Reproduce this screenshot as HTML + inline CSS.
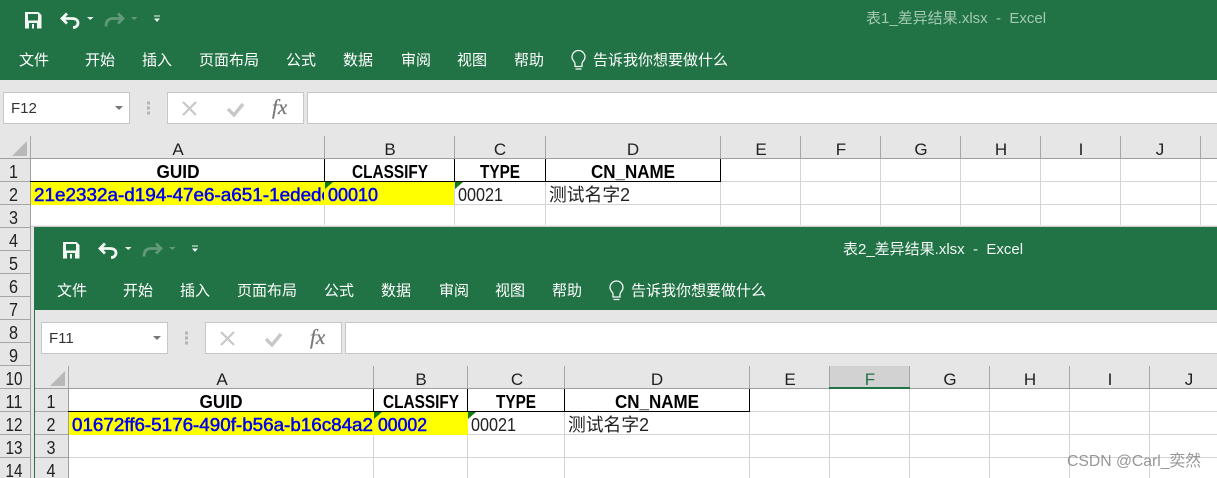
<!DOCTYPE html>
<html><head><meta charset="utf-8">
<style>
html,body{margin:0;padding:0;background:#fff;width:1217px;height:478px;overflow:hidden}
svg{display:block;position:absolute;left:0;top:0}
text{font-family:"Liberation Sans","Noto Sans CJK SC",sans-serif}
.rb{font-size:15px;fill:#fff}
.h{font-size:17px;fill:#222;text-anchor:middle}
.r{font-size:18px;fill:#222;text-anchor:middle}
.b{font-size:18px;font-weight:bold;fill:#000;text-anchor:middle}
.bl{font-size:18px;fill:#0000f0;stroke:#0000f0;stroke-width:.5px}
.d{font-size:18px;fill:#222}
.nb{font-size:15px;fill:#333}
.ti{font-size:15px;white-space:pre}
.fx{font-size:21px;font-style:italic;font-family:"Liberation Serif",serif;fill:#7a7a7a;stroke:#7a7a7a;stroke-width:.3px}
.g{stroke:#d4d4d4;stroke-width:1;fill:none}
.t{stroke:#a6a6a6;stroke-width:1}
</style></head><body>
<svg width="1217" height="478" viewBox="0 0 1217 478" xmlns="http://www.w3.org/2000/svg">
<rect width="1217" height="478" fill="#fff"/>

<!-- WINDOW 1 -->
<rect width="1217" height="80" fill="#217346"/>
<rect y="80" width="1217" height="78" fill="#e6e6e6"/>
<path d="M25 12h13.500l3 3v13.500h-16.500z" fill="#f4f8f5"/><rect x="28" y="14" width="10" height="6.500" fill="#217346"/><rect x="29" y="23" width="8" height="5.500" fill="#217346"/><rect x="32" y="24" width="2" height="4.500" fill="#f4f8f5"/>
<path d="M67 13.500l-5 5 5 5M62 18.500h10c4 0 6 2 6 4.500s-2 4.500-5 4.500" fill="none" stroke="#f4f8f5" stroke-width="2.800"/>
<path d="M87 17h6.500l-3.250 3z" fill="#f4f8f5"/>
<path d="M118 13.500l5 5-5 5M123 18.500h-10c-5 0-7 3-7 8" fill="none" stroke="#62997a" stroke-width="2.800"/>
<path d="M131 17h6.500l-3.250 3z" fill="#62997a"/>
<path d="M154 15.500h6v1h-6zM154 18.500h6l-3 3.500z" fill="#f4f8f5"/>
<text class="ti" x="866" y="23" fill="#a3c9b3">表1_差异结果.xlsx  -  Excel</text>
<text class="rb" x="19" y="65">文件</text><text class="rb" x="85" y="65">开始</text><text class="rb" x="142" y="65">插入</text><text class="rb" x="199" y="65">页面布局</text><text class="rb" x="286" y="65">公式</text><text class="rb" x="343" y="65">数据</text><text class="rb" x="401" y="65">审阅</text><text class="rb" x="457" y="65">视图</text><text class="rb" x="514" y="65">帮助</text>
<path d="M575 66.500v-3c0-2-3-3-3-6.500a6.500 6.500 0 0 1 13 0c0 3.500-3 4.500-3 6.500v3zM575.500 69h6" fill="none" stroke="#f4f8f5" stroke-width="1.300"/>
<text class="rb" x="593" y="65">告诉我你想要做什么</text>

<rect x="3.500" y="92.500" width="126" height="31" fill="#fff" stroke="#c6c6c6"/>
<text class="nb" x="11" y="113">F12</text>
<path d="M115 106h8l-4 4z" fill="#777"/>
<path d="M147 101.500h3v3h-3zM147 106.500h3v3h-3zM147 111.500h3v3h-3z" fill="#b4b4b4"/>
<rect x="167.500" y="92.500" width="136" height="31" fill="#fff" stroke="#c6c6c6"/>
<path d="M183 102l13 13M196 102l-13 13" stroke="#c8c8c8" stroke-width="2.200" fill="none"/>
<path d="M228 109l6 6 9-11" stroke="#c8c8c8" stroke-width="3.400" fill="none"/>
<text class="fx" x="272" y="114">fx</text>
<rect x="307.500" y="92.500" width="915" height="31" fill="#fff" stroke="#c6c6c6"/>
<path d="M27 141v15H12z" fill="#b8b8b8"/>
<path class="t" d="M30.500 136v22M324.500 136v22M454.500 136v22M545.500 136v22M720.500 136v22M800.500 136v22M880.500 136v22M960.500 136v22M1040.500 136v22M1120.500 136v22M1200.500 136v22"/>
<rect x="0" y="158" width="1217" height="1" fill="#9e9e9e"/>
<rect x="0" y="159" width="30" height="319" fill="#e6e6e6"/>
<rect x="30" y="159" width="1" height="319" fill="#9e9e9e"/>
<path class="g" d="M31 181.500h1186M31 204.500h1186M324.500 159v68M454.500 159v68M545.500 159v68M720.500 159v68M800.500 159v68M880.500 159v68M960.500 159v68M1040.500 159v68M1120.500 159v68M1200.500 159v68"/>
<rect x="31" y="182" width="423" height="23" fill="#ff0"/>
<path d="M30 181.500h691M324.500 159v23M454.500 159v23M545.500 159v23M720.500 159v23" stroke="#000" stroke-width="1" fill="none"/>
<path d="M325 182h8l-8 7zM455 182h8l-8 7z" fill="#107c10"/>
<text class="h" x="178" y="155">A</text><text class="h" x="390" y="155">B</text><text class="h" x="500" y="155">C</text><text class="h" x="633" y="155">D</text><text class="h" x="761" y="155">E</text><text class="h" x="841" y="155">F</text><text class="h" x="921" y="155">G</text><text class="h" x="1001" y="155">H</text><text class="h" x="1081" y="155">I</text><text class="h" x="1160" y="155">J</text>
<text class="b" x="178" y="178" textLength="43" lengthAdjust="spacingAndGlyphs">GUID</text><text class="b" x="390" y="178" textLength="76" lengthAdjust="spacingAndGlyphs">CLASSIFY</text><text class="b" x="500" y="178" textLength="40" lengthAdjust="spacingAndGlyphs">TYPE</text><text class="b" x="633" y="178" textLength="84" lengthAdjust="spacingAndGlyphs">CN_NAME</text>
<svg x="34" y="182" width="290" height="23"><text class="bl" x="0" y="19" textLength="297" lengthAdjust="spacingAndGlyphs">21e2332a-d194-47e6-a651-1ededc</text></svg>
<text class="bl" x="328" y="201" textLength="50" lengthAdjust="spacingAndGlyphs">00010</text>
<text class="d" x="458" y="201" textLength="45" lengthAdjust="spacingAndGlyphs">00021</text>
<text class="d" x="549" y="201" textLength="81" lengthAdjust="spacingAndGlyphs">测试名字2</text>
<!-- window 1 row headers -->
<path class="t" stroke="#b4b4b4" d="M0 181.500h30M0 204.500h30M0 227.500h30M0 250.500h30M0 273.500h30M0 296.500h30M0 319.500h30M0 342.500h30M0 365.500h30M0 388.500h30M0 411.500h30M0 434.500h30M0 457.500h30"/>
<text class="r" x="13.500" y="178" textLength="9" lengthAdjust="spacingAndGlyphs">1</text><text class="r" x="13.500" y="201" textLength="9" lengthAdjust="spacingAndGlyphs">2</text><text class="r" x="13.500" y="224" textLength="9" lengthAdjust="spacingAndGlyphs">3</text><text class="r" x="13.500" y="247" textLength="9" lengthAdjust="spacingAndGlyphs">4</text><text class="r" x="13.500" y="270" textLength="9" lengthAdjust="spacingAndGlyphs">5</text><text class="r" x="13.500" y="293" textLength="9" lengthAdjust="spacingAndGlyphs">6</text><text class="r" x="13.500" y="316" textLength="9" lengthAdjust="spacingAndGlyphs">7</text><text class="r" x="13.500" y="339" textLength="9" lengthAdjust="spacingAndGlyphs">8</text><text class="r" x="13.500" y="362" textLength="9" lengthAdjust="spacingAndGlyphs">9</text><text class="r" x="14" y="385" textLength="17" lengthAdjust="spacingAndGlyphs">10</text><text class="r" x="14" y="408" textLength="17" lengthAdjust="spacingAndGlyphs">11</text><text class="r" x="14" y="431" textLength="17" lengthAdjust="spacingAndGlyphs">12</text><text class="r" x="14" y="454" textLength="17" lengthAdjust="spacingAndGlyphs">13</text><text class="r" x="14" y="477" textLength="17" lengthAdjust="spacingAndGlyphs">14</text>

<!-- WINDOW 2 -->
<rect x="31" y="225" width="1186" height="1" fill="#eee"/><rect x="31" y="226" width="1186" height="1" fill="#ccc"/>
<rect x="31" y="227" width="3" height="251" fill="#e6e6e6"/>
<rect x="34" y="227" width="1183" height="83" fill="#217346"/>
<rect x="34" y="310" width="1" height="168" fill="#217346"/>
<rect x="35" y="310" width="1182" height="78" fill="#e6e6e6"/>
<g transform="translate(38 230)">
<path d="M25 12h13.500l3 3v13.500h-16.500z" fill="#f4f8f5"/><rect x="28" y="14" width="10" height="6.500" fill="#217346"/><rect x="29" y="23" width="8" height="5.500" fill="#217346"/><rect x="32" y="24" width="2" height="4.500" fill="#f4f8f5"/>
<path d="M67 13.500l-5 5 5 5M62 18.500h10c4 0 6 2 6 4.500s-2 4.500-5 4.500" fill="none" stroke="#f4f8f5" stroke-width="2.800"/>
<path d="M87 17h6.500l-3.250 3z" fill="#f4f8f5"/>
<path d="M118 13.500l5 5-5 5M123 18.500h-10c-5 0-7 3-7 8" fill="none" stroke="#62997a" stroke-width="2.800"/>
<path d="M131 17h6.500l-3.250 3z" fill="#62997a"/>
<path d="M154 15.500h6v1h-6zM154 18.500h6l-3 3.500z" fill="#f4f8f5"/>
</g>
<g transform="translate(38 230.500)">
<text class="rb" x="19" y="65">文件</text><text class="rb" x="85" y="65">开始</text><text class="rb" x="142" y="65">插入</text><text class="rb" x="199" y="65">页面布局</text><text class="rb" x="286" y="65">公式</text><text class="rb" x="343" y="65">数据</text><text class="rb" x="401" y="65">审阅</text><text class="rb" x="457" y="65">视图</text><text class="rb" x="514" y="65">帮助</text>
<path d="M575 66.500v-3c0-2-3-3-3-6.500a6.500 6.500 0 0 1 13 0c0 3.500-3 4.500-3 6.500v3zM575.500 69h6" fill="none" stroke="#f4f8f5" stroke-width="1.300"/>
<text class="rb" x="593" y="65">告诉我你想要做什么</text>
</g>
<text class="ti" x="843" y="254" fill="#f2f7f4">表2_差异结果.xlsx  -  Excel</text>

<rect x="41.500" y="322.500" width="126" height="31" fill="#fff" stroke="#c6c6c6"/>
<text class="nb" x="49" y="343">F11</text>
<path d="M153 336h8l-4 4z" fill="#777"/>
<path d="M185 331.500h3v3h-3zM185 336.500h3v3h-3zM185 341.500h3v3h-3z" fill="#b4b4b4"/>
<rect x="205.500" y="322.500" width="136" height="31" fill="#fff" stroke="#c6c6c6"/>
<path d="M221 332l13 13M234 332l-13 13" stroke="#c8c8c8" stroke-width="2.200" fill="none"/>
<path d="M266 339l6 6 9-11" stroke="#c8c8c8" stroke-width="3.400" fill="none"/>
<text class="fx" x="310" y="344">fx</text>
<rect x="345.500" y="322.500" width="880" height="31" fill="#fff" stroke="#c6c6c6"/>

<path d="M65 371v15H50z" fill="#b8b8b8"/>
<rect x="829.500" y="366" width="80" height="22" fill="#d2d2d2"/>
<path class="t" d="M68.500 366v22M373.500 366v22M467.500 366v22M564.500 366v22M749.500 366v22M829.500 366v22M909.500 366v22M989.500 366v22M1069.500 366v22M1149.500 366v22"/>
<rect x="35" y="388" width="1182" height="1" fill="#9e9e9e"/>
<rect x="829" y="387" width="81" height="2" fill="#217346"/>
<rect x="35" y="389" width="33" height="89" fill="#e6e6e6"/>
<rect x="68" y="388" width="1" height="90" fill="#9e9e9e"/>
<rect x="69" y="389" width="1148" height="89" fill="#fff"/>
<path class="g" d="M69 411.500h1148M69 434.500h1148M69 457.500h1148M373.500 389v89M467.500 389v89M564.500 389v89M749.500 389v89M829.500 389v89M909.500 389v89M989.500 389v89M1069.500 389v89M1149.500 389v89"/>
<rect x="69" y="412" width="399" height="23" fill="#ff0"/>
<path d="M68 411.500h682M373.500 389v23M467.500 389v23M564.500 389v23M749.500 389v23" stroke="#000" stroke-width="1" fill="none"/>
<path d="M374 412h8l-8 7zM468 412h8l-8 7z" fill="#107c10"/>
<text class="h" x="222" y="385">A</text><text class="h" x="421" y="385">B</text><text class="h" x="517" y="385">C</text><text class="h" x="657" y="385">D</text><text class="h" x="790" y="385">E</text><text class="h" x="870" y="385" style="fill:#217346">F</text><text class="h" x="950" y="385">G</text><text class="h" x="1030" y="385">H</text><text class="h" x="1110" y="385">I</text><text class="h" x="1189" y="385">J</text>
<text class="b" x="221" y="408" textLength="43" lengthAdjust="spacingAndGlyphs">GUID</text><text class="b" x="421" y="408" textLength="76" lengthAdjust="spacingAndGlyphs">CLASSIFY</text><text class="b" x="516" y="408" textLength="40" lengthAdjust="spacingAndGlyphs">TYPE</text><text class="b" x="657" y="408" textLength="84" lengthAdjust="spacingAndGlyphs">CN_NAME</text>
<text class="bl" x="72" y="431" textLength="301" lengthAdjust="spacingAndGlyphs">01672ff6-5176-490f-b56a-b16c84a2</text>
<text class="bl" x="378" y="431" textLength="49" lengthAdjust="spacingAndGlyphs">00002</text>
<text class="d" x="471" y="431" textLength="45" lengthAdjust="spacingAndGlyphs">00021</text>
<text class="d" x="568" y="431" textLength="81" lengthAdjust="spacingAndGlyphs">测试名字2</text>
<path class="t" stroke="#b4b4b4" d="M35 411.500h33M35 434.500h33M35 457.500h33"/>
<text class="r" x="51" y="408" textLength="9" lengthAdjust="spacingAndGlyphs">1</text><text class="r" x="51" y="431" textLength="9" lengthAdjust="spacingAndGlyphs">2</text><text class="r" x="51" y="454" textLength="9" lengthAdjust="spacingAndGlyphs">3</text><text class="r" x="51" y="477" textLength="9" lengthAdjust="spacingAndGlyphs">4</text>

<text x="1067" y="466" font-size="16" fill="#858585" fill-opacity="0.85" textLength="134" lengthAdjust="spacingAndGlyphs">CSDN @Carl_奕然</text>
</svg>
</body></html>
